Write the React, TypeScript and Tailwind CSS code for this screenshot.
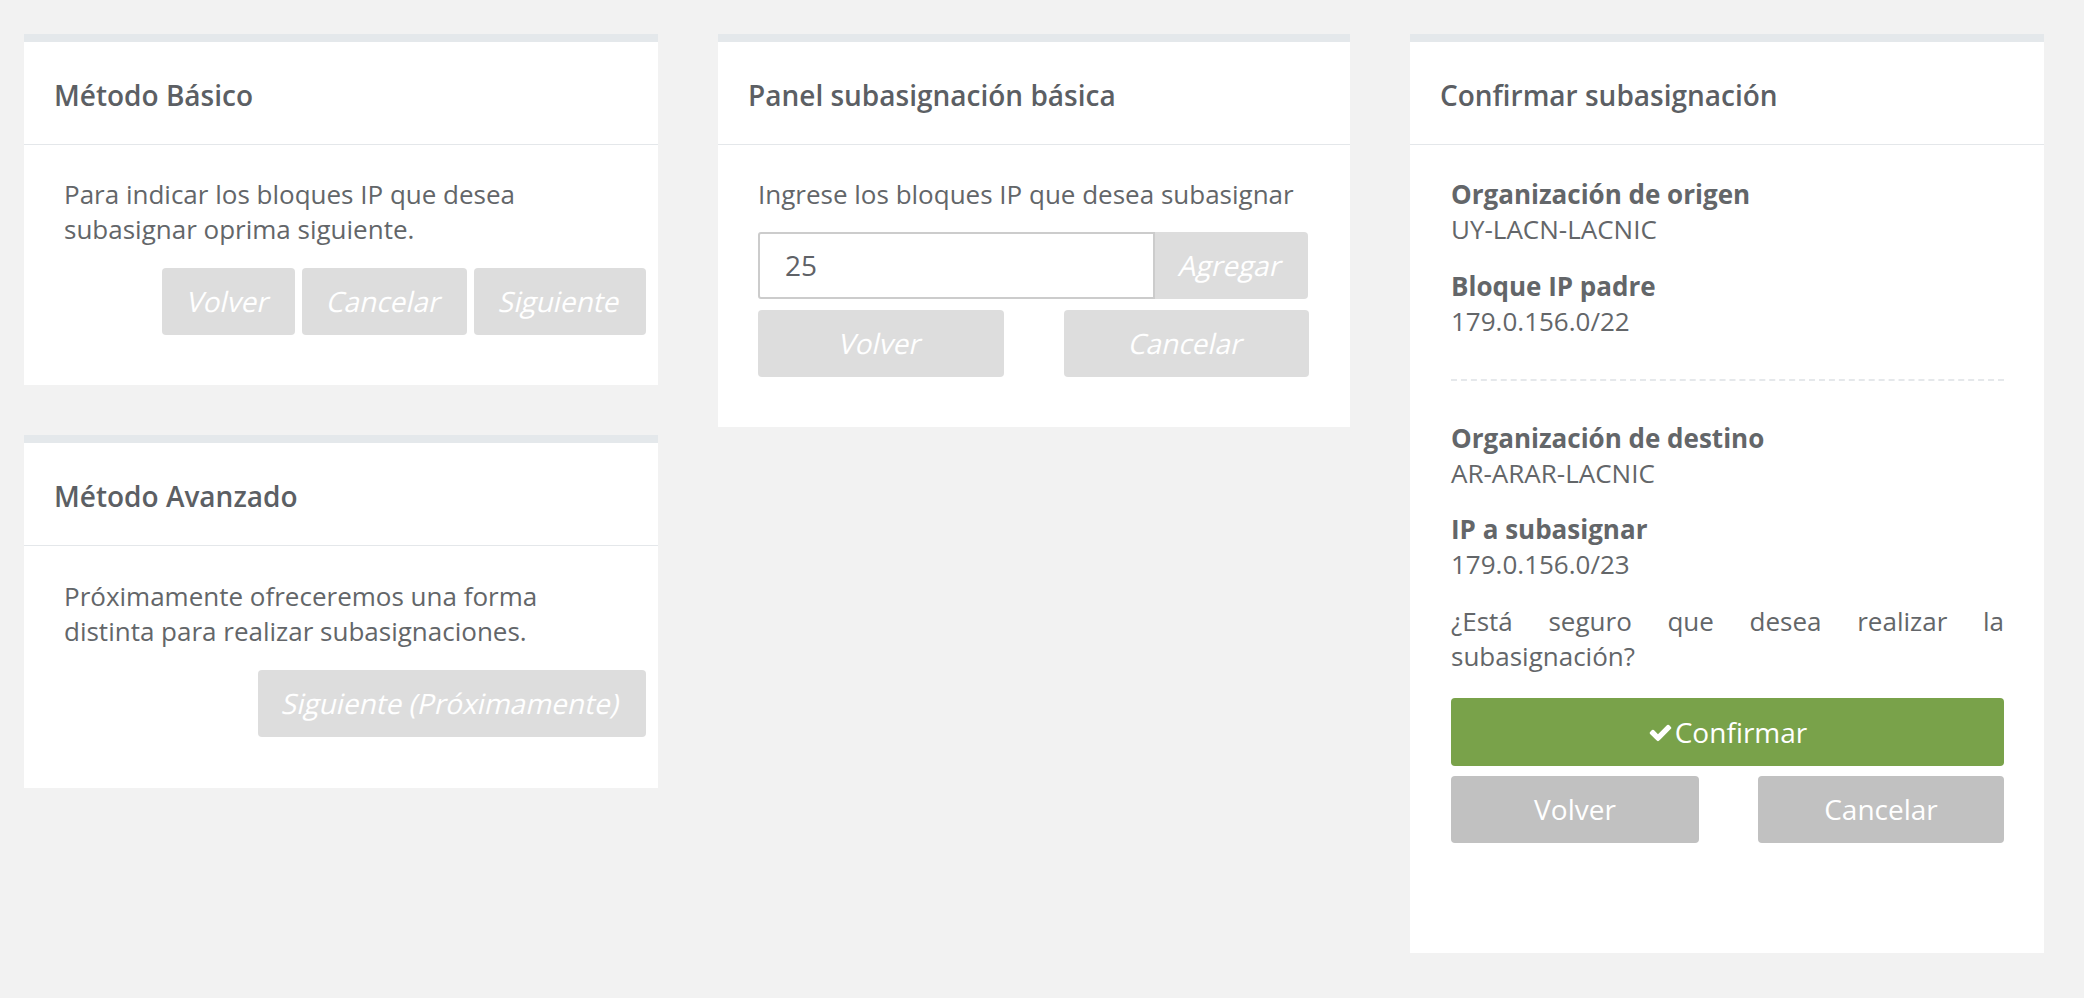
import React from 'react';

const font = { fontFamily: '"Open Sans", "Liberation Sans", sans-serif' };

function Card({ title, children, bodyClass }: { title: string; children: React.ReactNode; bodyClass: string }) {
  return (
    <div className="bg-white border-t-8 border-[#e4e8eb]">
      <div className="h-[103px] flex items-center pl-[30px] pt-[5px] border-b border-[#e4e7ea]">
        <h2 className="text-[28px] font-semibold text-[#5c5f64]">{title}</h2>
      </div>
      <div className={bodyClass}>{children}</div>
    </div>
  );
}

function CheckIcon() {
  return (
    <svg viewBox="0 0 1792 1792" className="w-[25px] h-[25px] fill-white">
      <path d="M1671 566q0 40-28 68l-724 724-136 136q-28 28-68 28t-68-28l-136-136-362-362q-28-28-28-68t28-68l136-136q28-28 68-28t68 28l294 295 656-657q28-28 68-28t68 28l136 136q28 28 28 68z" />
    </svg>
  );
}

// botones deshabilitados con cursiva sintética
function Disabled({ label, className }: { label: string; className: string }) {
  return (
    <button
      className={`h-[67px] rounded-[4px] bg-[#dddddd] text-white text-[28px] flex items-center justify-center ${className}`}
    >
      <span className="inline-block skew-x-[-13deg]">{label}</span>
    </button>
  );
}

export default function App() {
  return (
    <div className="min-h-screen bg-[#f2f2f2] text-[#636669] text-[26px] leading-[35px]" style={font}>
      <div className="flex items-start gap-[60px] pl-[24px] pt-[34px]">
        {/* Columna izquierda */}
        <div className="w-[634px] flex flex-col gap-[50px]">
          <Card title="Método Básico" bodyClass="pl-[40px] pr-[12px] pt-[32px] pb-[50px]">
            <p className="pr-[28px]">Para indicar los bloques IP que desea subasignar oprima siguiente.</p>
            <div className="flex justify-end gap-[7px] mt-[21px]">
              <Disabled label="Volver" className="w-[133px]" />
              <Disabled label="Cancelar" className="w-[165px]" />
              <Disabled label="Siguiente" className="w-[172px]" />
            </div>
          </Card>

          <Card title="Método Avanzado" bodyClass="pl-[40px] pr-[12px] pt-[33px] pb-[51px]">
            <p className="pr-[28px]">Próximamente ofreceremos una forma distinta para realizar subasignaciones.</p>
            <div className="flex justify-end mt-[21px]">
              <Disabled label="Siguiente (Próximamente)" className="w-[388px]" />
            </div>
          </Card>
        </div>

        {/* Panel central */}
        <div className="w-[632px]">
          <Card title="Panel subasignación básica" bodyClass="px-[40px] pt-[32px] pb-[50px]">
            <p>Ingrese los bloques IP que desea subasignar</p>
            <div className="flex mt-[20px] w-[550px]">
              <div className="flex-1 h-[67px] border-2 border-[#cccccc] rounded-l-[3px] flex items-center pl-[25px] text-[28px] text-[#5f6267]">
                25
              </div>
              <Disabled label="Agregar" className="w-[153px] rounded-l-none" />
            </div>
            <div className="flex justify-between mt-[11px] w-[551px]">
              <Disabled label="Volver" className="w-[246px]" />
              <Disabled label="Cancelar" className="w-[245px]" />
            </div>
          </Card>
        </div>

        {/* Confirmación */}
        <div className="w-[634px]">
          <Card title="Confirmar subasignación" bodyClass="pl-[41px] pr-[40px] pt-[32px] pb-[110px]">
            <div className="font-bold">Organización de origen</div>
            <div>UY-LACN-LACNIC</div>
            <div className="font-bold mt-[22px]">Bloque IP padre</div>
            <div>179.0.156.0/22</div>
            <div className="mt-[40px] mb-[40px] border-t-2 border-dashed border-[#e5e8eb]" />
            <div className="font-bold">Organización de destino</div>
            <div>AR-ARAR-LACNIC</div>
            <div className="font-bold mt-[21px]">IP a subasignar</div>
            <div>179.0.156.0/23</div>
            <p className="mt-[22px] text-justify">¿Está seguro que desea realizar la subasignación?</p>
            <button className="mt-[24px] w-full h-[68px] rounded-[4px] bg-[#79a24a] text-white text-[28px] flex items-center justify-center gap-[2px]">
              <CheckIcon />
              Confirmar
            </button>
            <div className="flex justify-between mt-[10px]">
              <button className="w-[248px] h-[67px] rounded-[4px] bg-[#c1c1c1] text-white text-[28px]">Volver</button>
              <button className="w-[246px] h-[67px] rounded-[4px] bg-[#c1c1c1] text-white text-[28px]">Cancelar</button>
            </div>
          </Card>
        </div>
      </div>
    </div>
  );
}
